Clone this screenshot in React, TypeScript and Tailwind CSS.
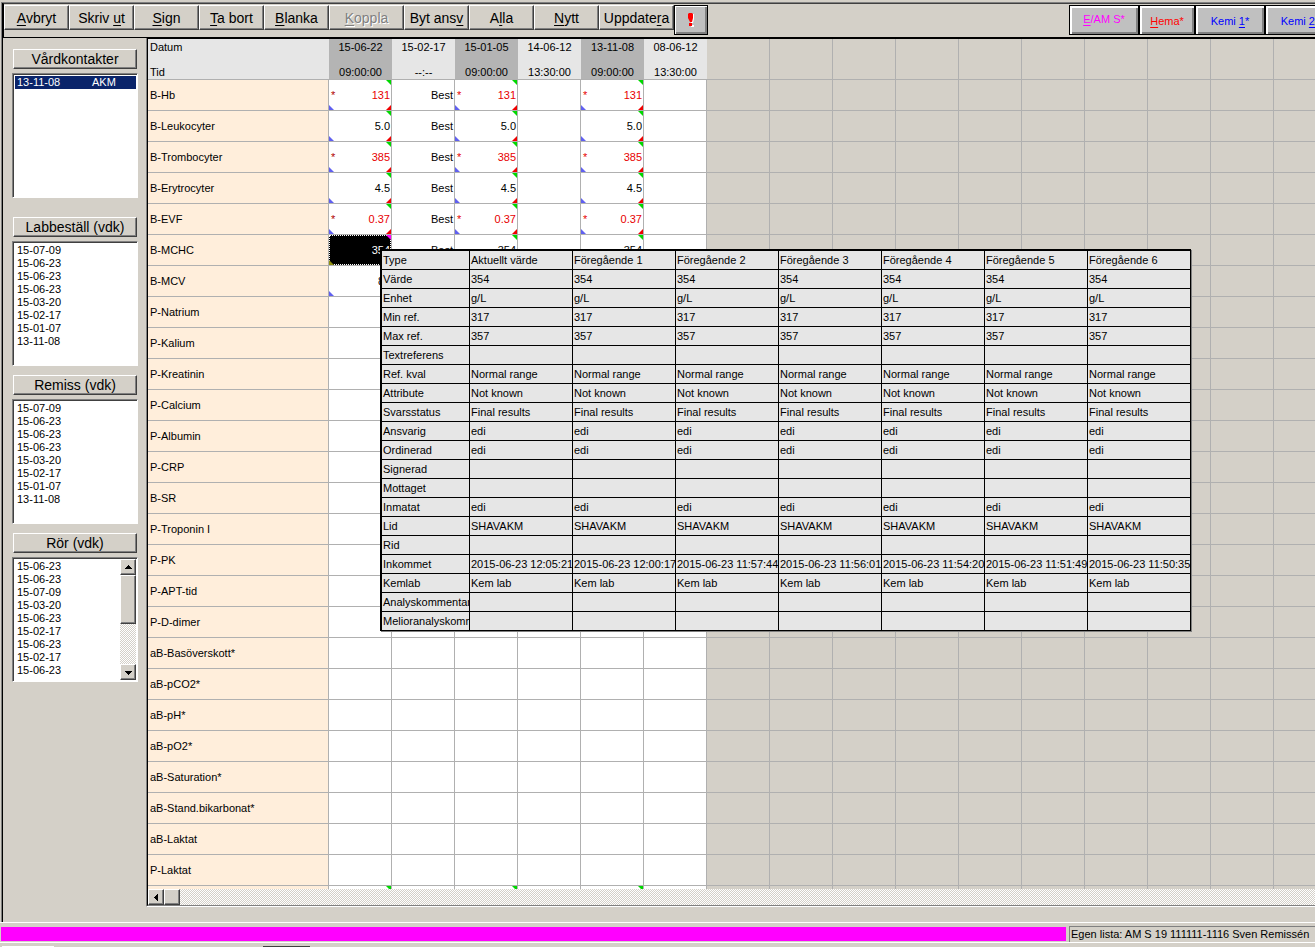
import React from "react";

const bevel =
  "border border-t-white border-l-white border-b-[#404040] border-r-[#404040] bg-[#d4d0c8] shadow-[inset_-1px_-1px_0_#808080]";
const dither =
  "bg-[conic-gradient(#ffffff_25%,#d4d0c8_0_50%,#ffffff_0_75%,#d4d0c8_0)] bg-[length:2px_2px]";

function Hot({ text, at }: { text: string; at: number }) {
  return (
    <span className="whitespace-pre">
      {text.slice(0, at)}
      <span className="underline underline-offset-2">{text[at]}</span>
      {text.slice(at + 1)}
    </span>
  );
}

const tools = [
  { text: "Avbryt", at: 0 },
  { text: "Skriv ut", at: 6 },
  { text: "Sign", at: 0 },
  { text: "Ta bort", at: 0 },
  { text: "Blanka", at: 0 },
  { text: "Koppla", at: 0, wide: true, disabled: true },
  { text: "Byt ansv", at: 7 },
  { text: "Alla", at: 1 },
  { text: "Nytt", at: 0 },
  { text: "Uppdatera", at: 7, wide: true },
];

const groups = [
  { text: "E/AM S*", at: 0, style: "w-[70px] text-[#ff00ff] pb-px" },
  { text: "Hema*", at: 0, style: "w-14 text-[#ff0000] pt-[3px]" },
  { text: "Kemi 1*", at: 5, style: "w-[70px] text-[#0000ff] pt-[3px]" },
  { text: "Kemi 2*", at: 5, style: "w-[70px] text-[#0000ff] pt-[3px]" },
];

function Toolbar() {
  return (
    <header className="flex h-[34px] shrink-0 items-start overflow-hidden border-l border-t border-l-black border-t-[#404040] pt-px">
      {tools.map((t) => (
        <button
          key={t.text}
          disabled={t.disabled}
          className={`${bevel} h-[25px] shrink-0 text-sm leading-5 ${t.wide ? "w-[75px]" : "w-[65px]"} ${
            t.disabled ? "text-[#808080] [text-shadow:1px_1px_0_#ffffff]" : ""
          }`}
        >
          <Hot text={t.text} at={t.at} />
        </button>
      ))}
      <button
        aria-label="Akut"
        className="flex h-[30px] w-[34px] shrink-0 items-center justify-center border border-black bg-[#c0c0c0] shadow-[inset_1px_1px_0_#ffffff,inset_-2px_-2px_0_#808080]"
      >
        <svg width="7" height="16" viewBox="0 0 7 16">
          <path d="M2 2h4v5l-1 4H3L2 7zM3 13h3v2H3z" fill="#ffffff" />
          <path d="M1 1h3l1 1v4L4 10H2L0 6V2zM1 11h3v3H1z" fill="#ff0000" />
        </svg>
      </button>
      <nav className="-mr-5 ml-auto flex">
        {groups.map((g) => (
          <button
            key={g.text}
            className={`h-[30px] shrink-0 border border-black bg-[#c0c0c0] text-[11px] shadow-[inset_2px_2px_0_#ffffff,inset_-2px_-2px_0_#808080] ${g.style}`}
          >
            <Hot text={g.text} at={g.at} />
          </button>
        ))}
      </nav>
    </header>
  );
}

function Arrow({ dir }: { dir: "up" | "down" | "left" }) {
  const d = { up: "M0 5h7L3.500 1z", down: "M0 2h7L3.500 6z", left: "M5 0v7L1 3.500z" }[dir];
  return (
    <svg width="7" height="7" viewBox="0 0 7 7" shapeRendering="crispEdges">
      <path d={d} />
    </svg>
  );
}

const orders = ["15-07-09", "15-06-23", "15-06-23", "15-06-23", "15-03-20", "15-02-17", "15-01-07", "13-11-08"];
const tubes = [
  "15-06-23", "15-06-23", "15-07-09", "15-03-20", "15-06-23", "15-02-17", "15-06-23", "15-02-17", "15-06-23",
];

function ListPanel({ title, items, scroll, selected }: {
  title: string;
  items: string[];
  scroll?: boolean;
  selected?: string;
}) {
  return (
    <section className="flex flex-col gap-1">
      <button className={`${bevel} mx-px h-5 text-sm leading-4`}>{title}</button>
      <div className="flex h-[125px] border border-b-white border-l-[#808080] border-r-white border-t-[#808080] bg-white p-px shadow-[inset_1px_1px_0_#404040]">
        <ul role="listbox" aria-label={title} className="flex-1 pl-px pt-px leading-[13px]">
          {selected && (
            <li role="option" aria-selected="true" className="flex bg-[#0a246a] pl-0.5 text-white">
              <span className="w-[75px]">{items[0]}</span>
              <span>{selected}</span>
            </li>
          )}
          {!selected &&
            items.map((v, i) => (
              <li key={i} role="option" aria-selected="false" className="pl-0.5">
                {v}
              </li>
            ))}
        </ul>
        {scroll && (
          <div className={`flex w-4 flex-col ${dither}`}>
            <button aria-label="Upp" className={`${bevel} flex h-4 items-center justify-center`}>
              <Arrow dir="up" />
            </button>
            <div className={`${bevel} h-[49px]`} />
            <button aria-label="Ned" className={`${bevel} mt-auto flex h-4 items-center justify-center`}>
              <Arrow dir="down" />
            </button>
          </div>
        )}
      </div>
    </section>
  );
}

const dates = [
  ["15-06-22", "09:00:00"],
  ["15-02-17", "--:--"],
  ["15-01-05", "09:00:00"],
  ["14-06-12", "13:30:00"],
  ["13-11-08", "09:00:00"],
  ["08-06-12", "13:30:00"],
];

const tests: { name: string; value?: string; flag?: boolean }[] = [
  { name: "B-Hb", value: "131", flag: true },
  { name: "B-Leukocyter", value: "5.0" },
  { name: "B-Trombocyter", value: "385", flag: true },
  { name: "B-Erytrocyter", value: "4.5" },
  { name: "B-EVF", value: "0.37", flag: true },
  { name: "B-MCHC", value: "354" },
  { name: "B-MCV" },
  { name: "P-Natrium" },
  { name: "P-Kalium" },
  { name: "P-Kreatinin" },
  { name: "P-Calcium" },
  { name: "P-Albumin" },
  { name: "P-CRP" },
  { name: "B-SR" },
  { name: "P-Troponin I" },
  { name: "P-PK" },
  { name: "P-APT-tid" },
  { name: "P-D-dimer" },
  { name: "aB-Basöverskott*" },
  { name: "aB-pCO2*" },
  { name: "aB-pH*" },
  { name: "aB-pO2*" },
  { name: "aB-Saturation*" },
  { name: "aB-Stand.bikarbonat*" },
  { name: "aB-Laktat" },
  { name: "P-Laktat" },
  { name: "" },
];

const spare = Array.from({ length: 16 }, (_, i) => i);

function Corner({ place }: { place: "green" | "red" | "blue" | "magenta" | "olive" }) {
  const look = {
    green: ["right-0 top-0", "M0 0h5v5z", "#00d800"],
    magenta: ["right-0 top-0", "M0 0h5v5z", "#ff00ff"],
    red: ["bottom-0 right-0", "M5 0v5H0z", "#f00000"],
    blue: ["bottom-0 left-0", "M0 0l5 5H0z", "#6060f0"],
    olive: ["bottom-0 left-0", "M0 0l5 5H0z", "#909010"],
  }[place];
  return (
    <svg className={`absolute ${look[0]}`} width="5" height="5" viewBox="0 0 5 5">
      <path d={look[1]} fill={look[2]} />
    </svg>
  );
}

const line = "border-b border-r border-[#b0b0b0]";

function ResultCell({ row, col }: { row: number; col: number }) {
  const t = tests[row];
  const base = `relative h-[31px] bg-white p-0 pr-px text-right ${line}`;
  const measured = col % 2 === 0 && col < 5;
  if (row === 26) return <td className={base}>{measured && <Corner place="green" />}</td>;
  if (row === 6 && col === 0)
    return (
      <td className={base}>
        <span className="pr-1.5">8</span>
        <Corner place="blue" />
      </td>
    );
  if (!t.value) return <td className={base} />;
  if (col === 1) return <td className={base}>Best</td>;
  if (!measured) return <td className={base} />;
  const active = row === 5 && col === 0;
  return (
    <td className={base}>
      {active ? (
        <div className="-mr-px flex h-[30px] items-center justify-end border border-dotted border-white bg-black text-white">
          {t.value}
        </div>
      ) : (
        <div className={`flex items-center justify-between pl-0.5 ${t.flag ? "text-[#e80000]" : ""}`}>
          <span className={col ? "" : "text-[#b00000]"}>{t.flag ? "*" : ""}</span>
          <span>{t.value}</span>
        </div>
      )}
      <Corner place={active ? "magenta" : "green"} />
      <Corner place={active ? "olive" : "blue"} />
      {!active && <Corner place="red" />}
    </td>
  );
}

function ResultGrid() {
  return (
    <table className="w-[1197px] table-fixed border-separate border-spacing-0">
      <colgroup>
        <col className="w-[181px]" />
        {dates.map((_, i) => (
          <col key={i} className="w-[63px]" />
        ))}
        {spare.map((i) => (
          <col key={i} className="w-[63px]" />
        ))}
      </colgroup>
      <thead>
        <tr>
          <th className="h-[41px] border-b border-[#b0b0b0] bg-[#e6e6e6] p-0 pl-0.5 pt-px text-left font-normal">
            <div className="flex flex-col gap-3">
              <span>Datum</span>
              <span>Tid</span>
            </div>
          </th>
          {dates.map(([d, t], i) => (
            <th
              key={d}
              className={`border-b border-[#b0b0b0] p-0 pt-px font-normal ${
                i % 2 === 0 ? "bg-[#b4b4b4]" : "bg-[#e6e6e6]"
              }`}
            >
              <div className="flex flex-col gap-3">
                <span>{d}</span>
                <span>{t}</span>
              </div>
            </th>
          ))}
          {spare.map((i) => (
            <td key={i} className={line} />
          ))}
        </tr>
      </thead>
      <tbody>
        {tests.map((t, row) => (
          <tr key={row}>
            <th className={`h-[31px] bg-[#ffeedb] p-0 pl-0.5 text-left font-normal ${line}`}>{t.name}</th>
            {dates.map((d, col) => (
              <ResultCell key={d[0]} row={row} col={col} />
            ))}
            {spare.map((i) => (
              <td key={i} className={line} />
            ))}
          </tr>
        ))}
      </tbody>
    </table>
  );
}

const same = (v: string) => Array<string>(7).fill(v);
const details: [string, string[]][] = [
  ["Type", ["Aktuellt värde", "Föregående 1", "Föregående 2", "Föregående 3", "Föregående 4", "Föregående 5", "Föregående 6"]],
  ["Värde", same("354")],
  ["Enhet", same("g/L")],
  ["Min ref.", same("317")],
  ["Max ref.", same("357")],
  ["Textreferens", same("")],
  ["Ref. kval", same("Normal range")],
  ["Attribute", same("Not known")],
  ["Svarsstatus", same("Final results")],
  ["Ansvarig", same("edi")],
  ["Ordinerad", same("edi")],
  ["Signerad", same("")],
  ["Mottaget", same("")],
  ["Inmatat", same("edi")],
  ["Lid", same("SHAVAKM")],
  ["Rid", same("")],
  ["Inkommet", ["12:05:21", "12:00:17", "11:57:44", "11:56:01", "11:54:20", "11:51:49", "11:50:35"].map((t) => `2015-06-23 ${t}`)],
  ["Kemlab", same("Kem lab")],
  ["Analyskommentar", same("")],
  ["Melioranalyskomm", same("")],
];

function DetailPopup() {
  const cell =
    "h-[19px] overflow-hidden whitespace-nowrap border-b border-r border-black p-0 pl-px text-left font-normal";
  return (
    <div className="absolute left-[232px] top-[210px] border-l-2 border-t-2 border-black bg-[#e6e6e6] shadow-[1px_1px_0_#808080]">
      <table className="w-[809px] table-fixed border-separate border-spacing-0">
        <colgroup>
          <col className="w-[88px]" />
          {details[0][1].map((c) => (
            <col key={c} className="w-[103px]" />
          ))}
        </colgroup>
        <tbody>
          {details.map(([name, values]) => (
            <tr key={name}>
              <th className={cell}>{name}</th>
              {values.map((v, i) => (
                <td key={i} className={cell}>
                  {v}
                </td>
              ))}
            </tr>
          ))}
        </tbody>
      </table>
    </div>
  );
}

export default function App() {
  return (
    <div className="flex h-screen flex-col overflow-hidden bg-[#d4d0c8] pt-0.5 font-['Liberation_Sans',Arial,sans-serif] text-[11px] leading-[13px] text-black">
      <div className="ml-px flex min-h-0 flex-1 flex-col border-l border-t border-[#808080]">
        <div className="flex min-h-0 flex-1 flex-col border-l border-black">
          <Toolbar />
          <main className="flex min-h-0 flex-1 border-t border-black pb-[15px]">
            <aside className="flex w-[143px] shrink-0 flex-col gap-[9px] pl-[9px] pr-2 pt-[11px]">
              <div className="pb-2.5">
                <ListPanel title="Vårdkontakter" items={["13-11-08"]} selected="AKM" />
              </div>
              <ListPanel title="Labbeställ (vdk)" items={orders} />
              <ListPanel title="Remiss (vdk)" items={orders} />
              <ListPanel title="Rör (vdk)" items={tubes} scroll />
            </aside>
            <div className="flex min-w-0 flex-1 flex-col border-b border-l border-b-white border-l-[#808080]">
              <div className="flex min-h-0 flex-1 flex-col border-b border-l border-t border-b-[#808080] border-l-black border-t-black">
                <div className="relative min-h-0 flex-1 overflow-hidden">
                  <ResultGrid />
                  <DetailPopup />
                </div>
                <div className={`flex h-4 shrink-0 ${dither}`}>
                  <button aria-label="Vänster" className={`${bevel} flex w-4 items-center justify-center`}>
                    <Arrow dir="left" />
                  </button>
                  <div className={`${bevel} w-4`} />
                </div>
              </div>
            </div>
          </main>
        </div>
      </div>
      <footer className="shrink-0 border-t border-white">
        <div className="flex h-5 items-start border-b border-white pl-px pt-[3px]">
          <div className="mt-px h-3.5 flex-1 bg-[#ff00ff]" />
          <div className="ml-[3px] h-4 w-[246px] overflow-hidden whitespace-nowrap border-l border-t border-[#808080] pl-px leading-[15px]">
            Egen lista: AM S 19 111111-1116 Sven Remissén
          </div>
        </div>
        <div className="flex h-1 items-end">
          <div className="ml-0.5 h-px w-[52px] bg-white" />
          <div className="ml-[209px] h-px w-[47px] bg-[#404040]" />
        </div>
      </footer>
    </div>
  );
}
